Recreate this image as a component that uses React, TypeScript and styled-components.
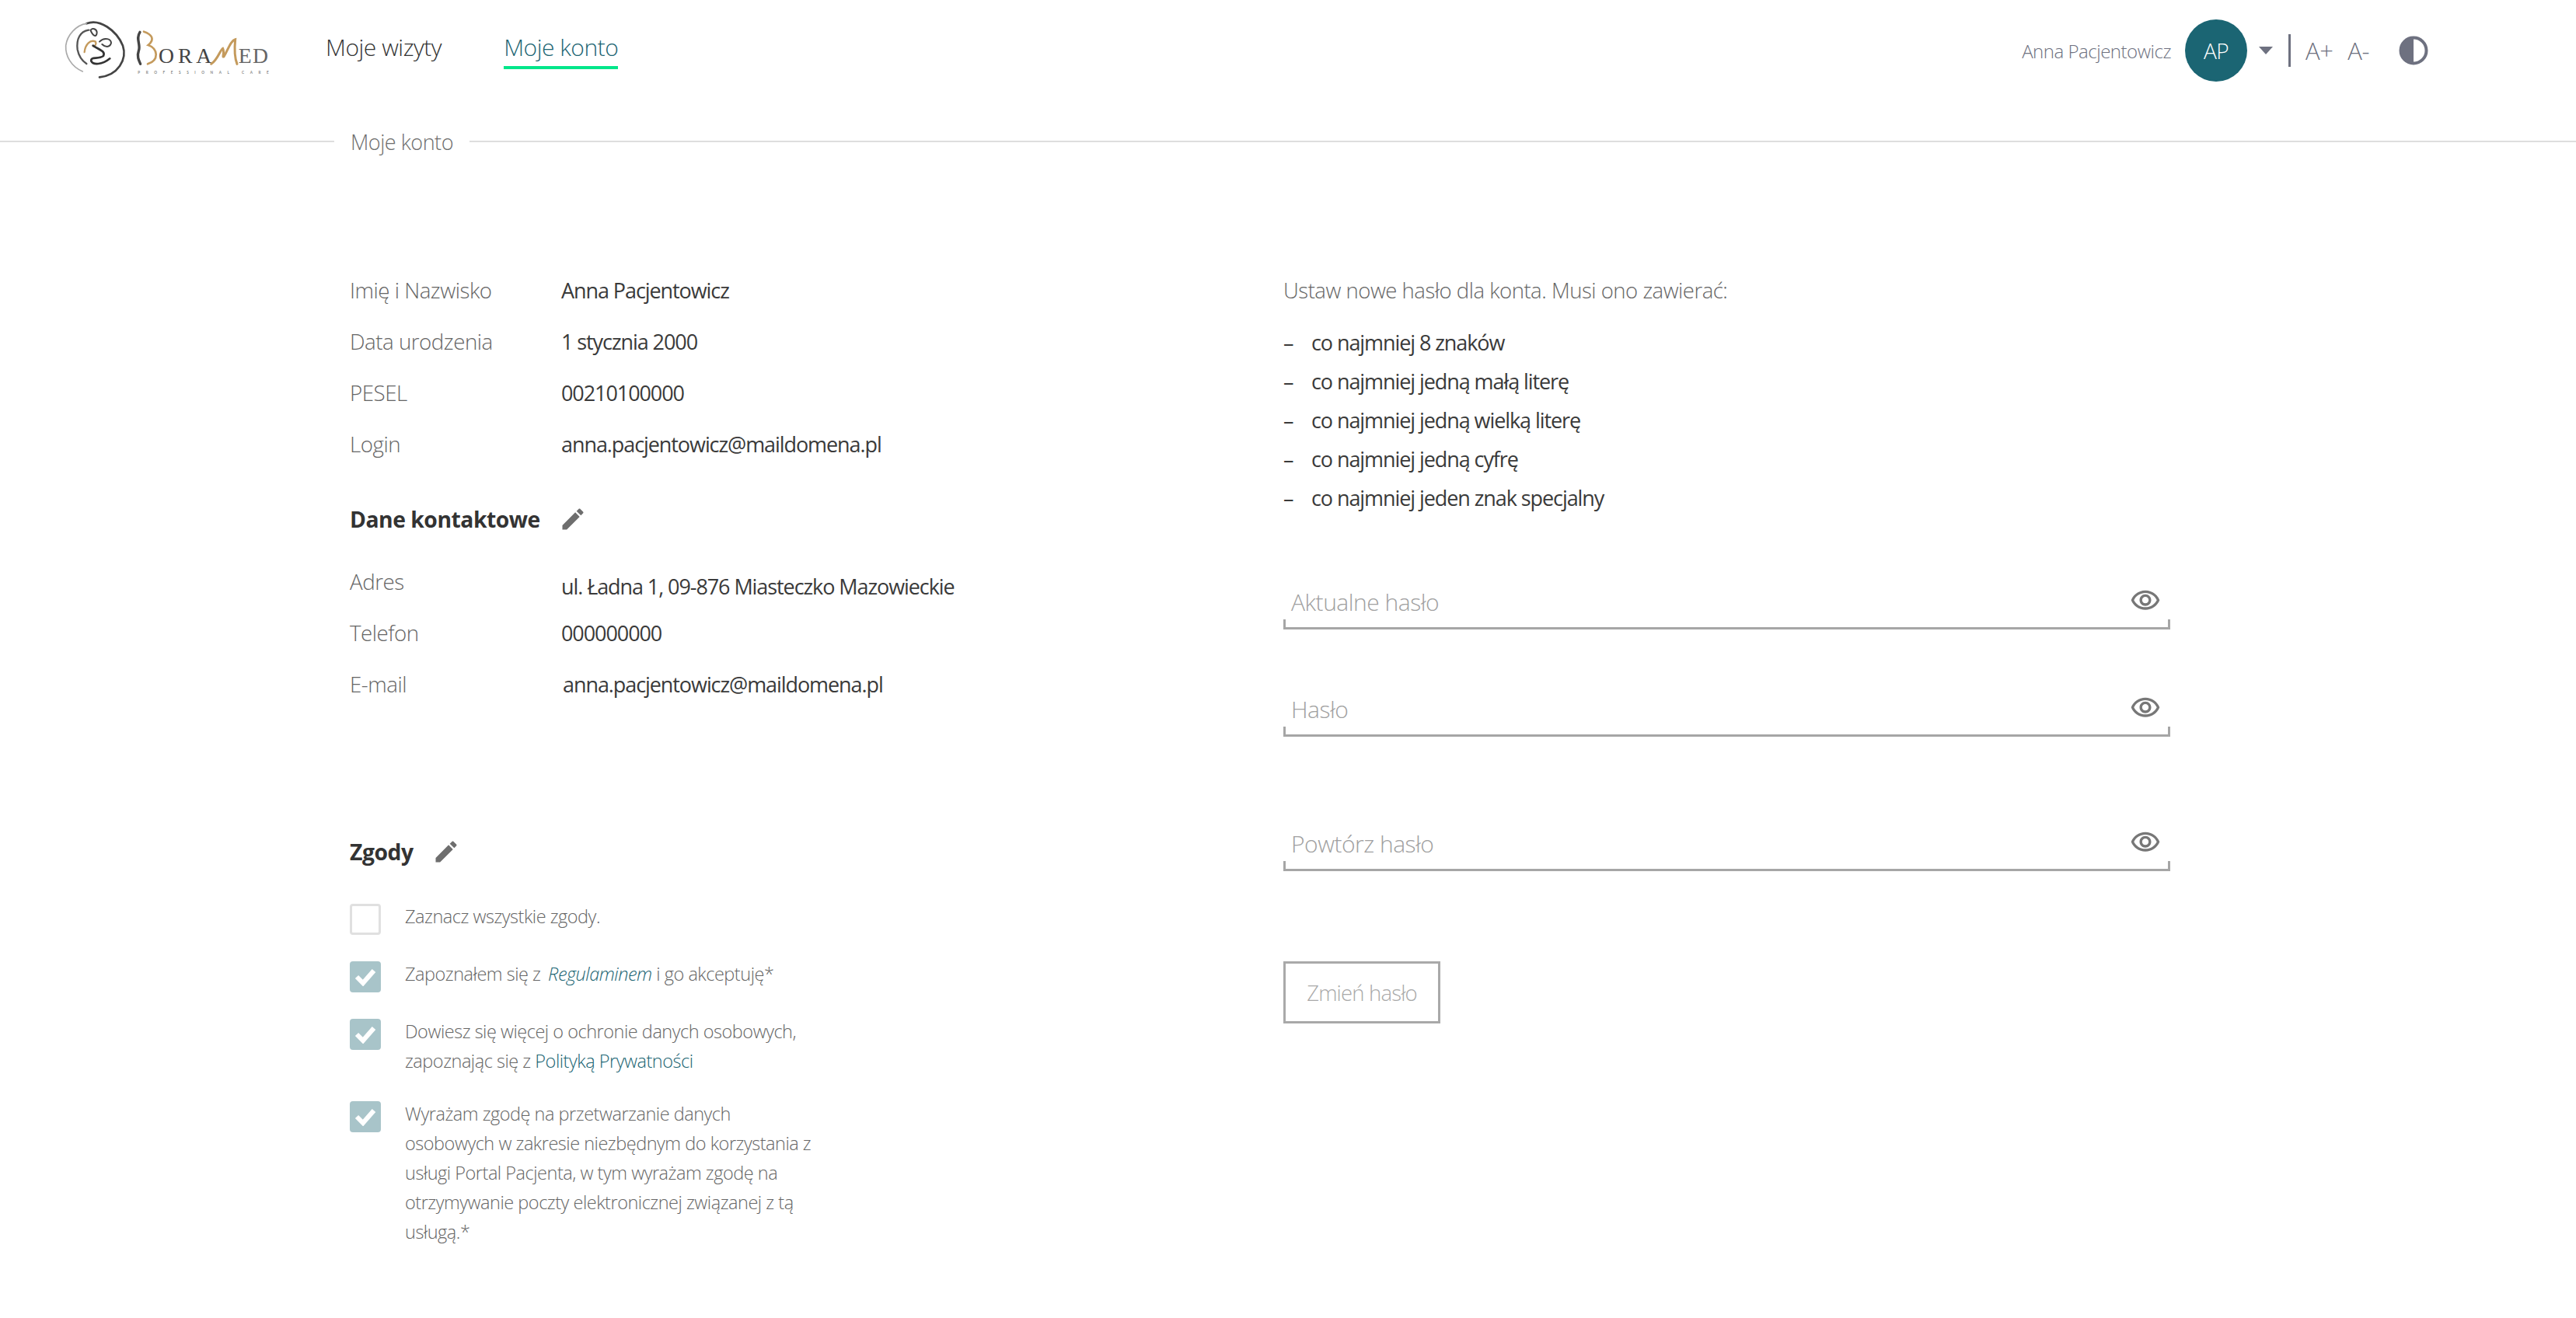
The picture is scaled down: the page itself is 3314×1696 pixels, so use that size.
import React from "react";
import styled, { createGlobalStyle } from "styled-components";

const Global = createGlobalStyle`
  html, body { margin: 0; padding: 0; background: #fff; }
  body { font-family: "Open Sans", "Lato", sans-serif; font-stretch: 88%; font-weight: 300; letter-spacing: -0.03em; color: #333; }
`;

const Page = styled.div`width: 3314px; min-height: 1696px; background: #fff; overflow: hidden;`;

const Header = styled.header`
  height: 130px; display: flex; align-items: center; padding: 0 190px 0 78px; box-sizing: border-box;
`;
const LogoWrap = styled.div`width: 270px; height: 84px; flex: none; margin-top: -2px;`;
const Nav = styled.nav`display: flex; gap: 80px; margin-left: 71px;`;
const NavLink = styled.a<{ $active?: boolean }>`
  font-size: 30px; line-height: 40px; height: 44px; box-sizing: content-box;
  color: ${(p) => (p.$active ? "#1b6573" : "#333")};
  border-bottom: ${(p) => (p.$active ? "4px solid #00e68a" : "4px solid transparent")};
`;
const UserBar = styled.div`margin-left: auto; display: flex; align-items: center; color: #6e7180;`;
const UserName = styled.span`font-size: 24px; font-weight: 300; margin-right: 18px;`;
const Avatar = styled.div`
  width: 80px; height: 80px; border-radius: 50%; background: #1b6573; color: #fff;
  display: flex; align-items: center; justify-content: center; font-size: 28px; font-weight: 300;
`;
const Caret = styled.span`
  width: 0; height: 0; margin-left: 15px; border-left: 9px solid transparent; border-right: 9px solid transparent;
  border-top: 10px solid #6e7180;
`;
const Divider = styled.span`width: 3px; height: 42px; background: #6e7180; margin: 0 19px 0 20px;`;
const FontBtn = styled.span`font-size: 31px; margin-right: 19px; line-height: 1;`;
const Contrast = styled.span`display: flex; margin-left: 19px;`;

const Crumb = styled.div`
  display: flex; align-items: center; height: 40px; margin-top: 32px; font-size: 27px; color: #6e6e6e;
  &::before { content: ""; width: 430px; height: 2px; background: #dedede; margin-right: 21px; }
  &::after { content: ""; flex: 1; height: 2px; background: #dedede; margin-left: 21px; }
`;

const Content = styled.main`
  display: grid; grid-template-columns: 1201px 1140px; padding: 139px 0 0 450px;
`;
const Left = styled.section`display: flex; flex-direction: column; margin-top: -1px;`;
const Right = styled.section`display: flex; flex-direction: column;`;

const InfoRow = styled.div`display: grid; grid-template-columns: 272px 1fr; height: 66px; align-items: center; font-size: 27.7px;`;
const InfoLabel = styled.span`color: #666;`;
const InfoValue = styled.span<{ $dy?: number; $dx?: number }>`
  color: #3a3a3a; font-size: 27px; letter-spacing: -0.04em; font-weight: 400;
  padding-top: ${(p) => p.$dy || 0}px; padding-left: ${(p) => p.$dx || 0}px;
`;
const Heading = styled.h2<{ $top: number; $gap: number }>`
  display: flex; align-items: center; gap: ${(p) => p.$gap}px; margin: ${(p) => p.$top}px 0 15px; height: 64px;
  font-size: 28.3px; font-weight: 700; color: #333;
`;
const Consents = styled.div`display: flex; flex-direction: column; margin-top: 17px;`;
const Consent = styled.label<{ $mb: number }>`
  display: flex; align-items: flex-start; gap: 31px; margin-bottom: ${(p) => p.$mb}px;
`;
const Box = styled.span<{ $checked?: boolean }>`
  flex: none; width: 40px; height: 40px; box-sizing: border-box; border-radius: 4px; margin-top: 3px;
  display: flex; align-items: center; justify-content: center;
  background: ${(p) => (p.$checked ? "#a8c4c9" : "#fff")};
  border: ${(p) => (p.$checked ? "none" : "3px solid #e0e0e0")};
`;
const ConsentText = styled.span`font-size: 23.5px; line-height: 38px; color: #666;`;
const LinkText = styled.a`color: #1b6573;`;
const LinkItalic = styled.a`color: #1b6573; font-style: italic; margin-left: 4px;`;

const Intro = styled.p`margin: 0; font-size: 27.5px; height: 66px; line-height: 66px; color: #666;`;
const Rules = styled.ul`list-style: none; margin: 9px 0 0 0; padding: 0; display: flex; flex-direction: column;`;
const Rule = styled.li`
  display: flex; height: 50px; line-height: 50px; font-size: 27px; letter-spacing: -0.04em; font-weight: 400; color: #3a3a3a;
  &::before { content: "–"; width: 36px; flex: none; }
`;
const Field = styled.div<{ $top: number }>`
  position: relative; margin: ${(p) => p.$top}px 0 0 0; width: 1141px; height: 62px; box-sizing: border-box;
  display: flex; align-items: center; justify-content: space-between; padding: 0 12px 6px 10px;
  border-bottom: 3px solid #a6a6a6;
  &::before, &::after { content: ""; position: absolute; bottom: -3px; width: 3px; height: 13px; background: #a6a6a6; }
  &::before { left: 0; }
  &::after { right: 0; }
`;
const FieldLabel = styled.span`font-size: 30px; color: #a0a0a0;`;
const EyeWrap = styled.span`display: flex; margin-top: -4px;`;
const Button = styled.button`
  margin: 116px 0 0 0; align-self: flex-start; width: 202px; height: 80px; background: #fff;
  border: 3px solid #a9a9a9; font: inherit; font-size: 27.5px; font-weight: 300; letter-spacing: -0.03em; color: #a9a9a9; padding: 0;
`;

const Pencil = () => (
  <svg width="36" height="36" viewBox="0 0 24 24" fill="#6e6e6e" aria-hidden="true">
    <path d="M3 17.25V21h3.75L17.81 9.94l-3.75-3.75L3 17.25zM20.71 7.04c.39-.39.39-1.02 0-1.41l-2.34-2.34c-.39-.39-1.02-.39-1.41 0l-1.83 1.83 3.75 3.75 1.83-1.83z" />
  </svg>
);
const Eye = () => (
  <EyeWrap>
    <svg width="40" height="40" viewBox="0 0 24 24" fill="#777" aria-hidden="true">
      <path d="M12 6c3.79 0 7.17 2.13 8.82 5.5C19.17 14.87 15.79 17 12 17s-7.17-2.13-8.82-5.5C4.83 8.13 8.21 6 12 6m0-2C7 4 2.73 7.11 1 11.5 2.73 15.89 7 19 12 19s9.27-3.11 11-7.5C21.27 7.11 17 4 12 4zm0 5c1.38 0 2.5 1.12 2.5 2.5S13.38 14 12 14s-2.5-1.12-2.5-2.5S10.62 9 12 9m0-2c-2.48 0-4.5 2.02-4.5 4.5S9.52 16 12 16s4.5-2.02 4.5-4.5S14.48 7 12 7z" />
    </svg>
  </EyeWrap>
);
const Check = () => (
  <svg width="28" height="24" viewBox="0 0 28 24" fill="none" stroke="#fff" strokeWidth="6" aria-hidden="true">
    <path d="M3 12 L11 20 L25 4" />
  </svg>
);
const Logo = () => (
  <svg width="270" height="84" viewBox="0 0 810 252" fill="none" strokeLinecap="round">
    <path d="M100 25 C150 5 215 50 240 110 C258 165 220 225 150 232" stroke="#444" strokeWidth="8" />
    <path d="M100 25 C60 30 25 70 20 110 C18 150 40 190 85 210" stroke="#aaa" strokeWidth="5" />
    <path d="M108 50 C75 55 60 85 65 125 C70 150 85 170 100 180" stroke="#555" strokeWidth="7" />
    <path d="M115 50 C125 75 140 80 140 58 C138 45 122 42 118 48" stroke="#444" strokeWidth="6" />
    <path d="M92 135 C95 105 115 85 135 95 C140 105 130 115 125 112" stroke="#c49a5c" strokeWidth="7" />
    <path d="M150 95 C170 75 195 85 195 100 C190 120 170 115 160 105" stroke="#444" strokeWidth="6" />
    <path d="M125 110 C145 125 175 130 165 150 C145 165 115 150 118 170 C125 185 160 185 190 160" stroke="#333" strokeWidth="8" />
    <path d="M306 58 C288 86 311 106 301 131 C294 151 301 166 308 181" stroke="#444" strokeWidth="10" />
    <path d="M321 56 C351 66 366 86 338 108 C376 121 381 166 336 181" stroke="#c49a5c" strokeWidth="8" />
    <text x="378" y="176" fontFamily="Liberation Serif, serif" fontSize="83" fill="#444" textLength="205" letterSpacing="0">ORA</text>
    <path d="M581 181 C606 166 616 126 626 121 C634 136 621 161 631 151 C646 126 656 91 674 86 C671 116 671 156 681 181" stroke="#c49a5c" strokeWidth="9" />
    <text x="686" y="176" fontFamily="Liberation Serif, serif" fontSize="83" fill="#666" textLength="115" letterSpacing="0">ED</text>
    <text x="298" y="219" fontFamily="Lato, sans-serif" fontSize="14" fontWeight="700" fill="#888" textLength="505" letterSpacing="0">PROFESSIONAL CARE</text>
  </svg>
);
const ContrastIcon = () => (
  <svg width="38" height="38" viewBox="0 0 38 38" aria-hidden="true">
    <circle cx="19" cy="19" r="16.5" fill="#fff" stroke="#6e7180" strokeWidth="4" />
    <path d="M19 2.5 A16.5 16.5 0 0 0 19 35.5 Z" fill="#6e7180" />
  </svg>
);

const rules = [
  "co najmniej 8 znaków",
  "co najmniej jedną małą literę",
  "co najmniej jedną wielką literę",
  "co najmniej jedną cyfrę",
  "co najmniej jeden znak specjalny",
];

export default function App() {
  return (
    <Page>
      <Global />
      <Header>
        <LogoWrap><Logo /></LogoWrap>
        <Nav>
          <NavLink>Moje wizyty</NavLink>
          <NavLink $active>Moje konto</NavLink>
        </Nav>
        <UserBar>
          <UserName>Anna Pacjentowicz</UserName>
          <Avatar>AP</Avatar>
          <Caret />
          <Divider />
          <FontBtn>A+</FontBtn>
          <FontBtn>A-</FontBtn>
          <Contrast><ContrastIcon /></Contrast>
        </UserBar>
      </Header>
      <Crumb>Moje konto</Crumb>
      <Content>
        <Left>
          <InfoRow><InfoLabel>Imię i Nazwisko</InfoLabel><InfoValue>Anna Pacjentowicz</InfoValue></InfoRow>
          <InfoRow><InfoLabel>Data urodzenia</InfoLabel><InfoValue>1 stycznia 2000</InfoValue></InfoRow>
          <InfoRow><InfoLabel>PESEL</InfoLabel><InfoValue>00210100000</InfoValue></InfoRow>
          <InfoRow><InfoLabel>Login</InfoLabel><InfoValue>anna.pacjentowicz@maildomena.pl</InfoValue></InfoRow>
          <Heading $top={32} $gap={24}>Dane kontaktowe <Pencil /></Heading>
          <InfoRow><InfoLabel>Adres</InfoLabel><InfoValue $dy={12}>ul. Ładna 1, 09-876 Miasteczko Mazowieckie</InfoValue></InfoRow>
          <InfoRow><InfoLabel>Telefon</InfoLabel><InfoValue>000000000</InfoValue></InfoRow>
          <InfoRow><InfoLabel>E-mail</InfoLabel><InfoValue $dx={2}>anna.pacjentowicz@maildomena.pl</InfoValue></InfoRow>
          <Heading $top={151} $gap={24}>Zgody <Pencil /></Heading>
          <Consents>
            <Consent $mb={31}><Box /><ConsentText>Zaznacz wszystkie zgody.</ConsentText></Consent>
            <Consent $mb={31}><Box $checked><Check /></Box><ConsentText>Zapoznałem się z <LinkItalic>Regulaminem</LinkItalic> i go akceptuję*</ConsentText></Consent>
            <Consent $mb={30}><Box $checked><Check /></Box><ConsentText>Dowiesz się więcej o ochronie danych osobowych,<br />zapoznając się z <LinkText>Polityką Prywatności</LinkText></ConsentText></Consent>
            <Consent $mb={0}><Box $checked><Check /></Box><ConsentText>Wyrażam zgodę na przetwarzanie danych<br />osobowych w zakresie niezbędnym do korzystania z<br />usługi Portal Pacjenta, w tym wyrażam zgodę na<br />otrzymywanie poczty elektronicznej związanej z tą<br />usługą.*</ConsentText></Consent>
          </Consents>
        </Left>
        <Right>
          <Intro>Ustaw nowe hasło dla konta. Musi ono zawierać:</Intro>
          <Rules>{rules.map((r) => <Rule key={r}>{r}</Rule>)}</Rules>
          <Field $top={82}><FieldLabel>Aktualne hasło</FieldLabel><Eye /></Field>
          <Field $top={76}><FieldLabel>Hasło</FieldLabel><Eye /></Field>
          <Field $top={111}><FieldLabel>Powtórz hasło</FieldLabel><Eye /></Field>
          <Button>Zmień hasło</Button>
        </Right>
      </Content>
    </Page>
  );
}
